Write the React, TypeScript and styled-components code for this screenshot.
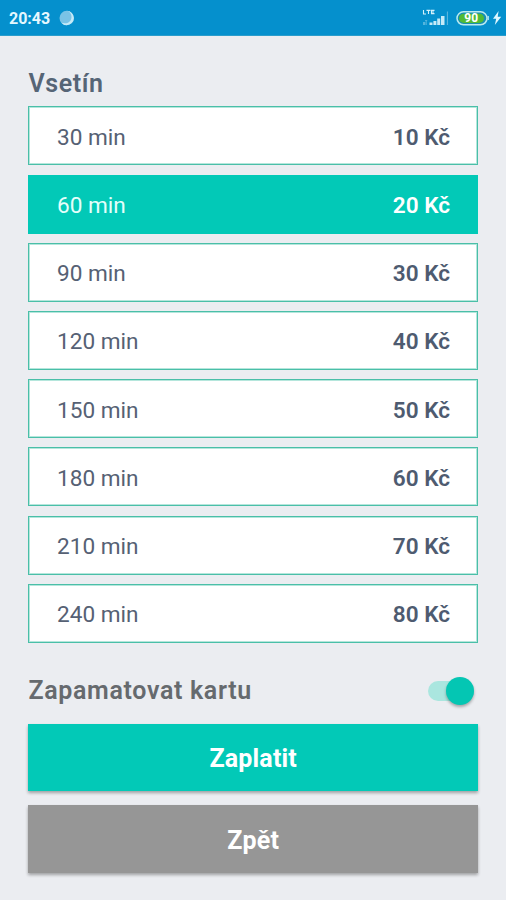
import React, { useState } from 'react';
import styled, { createGlobalStyle } from 'styled-components';

const GlobalStyle = createGlobalStyle`
  * { box-sizing: border-box; }
  body { margin: 0; background: #ebedf1; font-family: Roboto, sans-serif; }
  button { font: inherit; border: 0; padding: 0; }
`;

const Screen = styled.div`
  display: flex;
  flex-direction: column;
  height: 900px;
  background: #ebedf1;
`;

const StatusBar = styled.header`
  display: flex;
  align-items: center;
  height: 36px;
  padding: 0 4px 0 9px;
  background: #0590cd;
  border-bottom: 1px solid #2a9dcc;
  color: #e6f8ff;
`;

const Clock = styled.span`
  font-size: 16px;
  font-weight: 700;
  line-height: 20px;
  margin-top: 2px;
  width: 50px;
`;

const StatusIcons = styled.div`
  display: flex;
  align-items: center;
  margin-left: auto;
`;

const Content = styled.main`
  display: flex;
  flex-direction: column;
  padding: 31px 28px 0 28.4px;
`;

const Title = styled.h1`
  margin: 0;
  height: 39.4px;
  font-size: 25px;
  font-weight: 600;
  letter-spacing: 0.6px;
  line-height: 34px;
  color: #566576;
`;

const Options = styled.div`
  display: grid;
  grid-auto-rows: 59px;
  row-gap: 9.2px;
`;

const Option = styled.button<{ $selected: boolean }>`
  display: flex;
  align-items: center;
  justify-content: space-between;
  padding: 3px 27px 0 27.6px;
  border: 1px solid ${p => (p.$selected ? '#02c9b7' : '#4abfa8')};
  background: ${p => (p.$selected ? '#02c9b7' : '#fff')};
  box-shadow: ${p => (p.$selected ? 'none' : 'inset 0 0 0 1px #b5e6dc')};
  color: ${p => (p.$selected ? '#e4fffb' : '#566174')};
  font-size: 22.6px;
`;

const Price = styled.strong<{ $selected: boolean }>`
  font-weight: 600;
  color: ${p => (p.$selected ? '#fff' : '#4e5b70')};
`;

const RememberRow = styled.div`
  display: flex;
  align-items: center;
  justify-content: space-between;
  height: 81px;
  padding: 15px 4px 0 0;
`;

const RememberLabel = styled.span`
  font-size: 25px;
  font-weight: 600;
  letter-spacing: 0.66px;
  color: #666a6e;
`;

const Track = styled.button<{ $on: boolean }>`
  display: flex;
  align-items: center;
  justify-content: ${p => (p.$on ? 'flex-end' : 'flex-start')};
  width: 46px;
  height: 20px;
  border-radius: 10px;
  background: ${p => (p.$on ? '#aae6df' : '#bbb')};
`;

const Thumb = styled.span`
  width: 28px;
  height: 28px;
  flex: none;
  border-radius: 50%;
  background: #04c6b3;
  box-shadow: 0 2px 3px rgba(0, 0, 0, 0.3);
`;

const Actions = styled.div`
  display: grid;
  grid-auto-rows: 67.5px;
  row-gap: 14.2px;
`;

const Action = styled.button<{ $primary?: boolean }>`
  background: ${p => (p.$primary ? '#02c9b7' : '#969696')};
  color: #fff;
  font-size: 25px;
  font-weight: 700;
  letter-spacing: 0.15px;
  padding-top: 3px;
  box-shadow: 0 2px 3px rgba(0, 0, 0, 0.32);
`;

const Moon = () => (
  <svg width="18" height="18" viewBox="0 0 18 18">
    <circle cx="7.7" cy="9" r="7.2" fill="#7ac3e6" />
    <path d="M7.7 1.8A7.2 7.2 0 0 1 7.7 16.2Q4 16.2 2 13.5Q5.5 15 9 13.8C13 12 14 6 10 2.6Z" fill="#c5eaf7" />
  </svg>
);

const Signal = () => (
  <svg width="27" height="20" viewBox="0 0 27 20">
    <path d="M1.5 2v4h2.5M4.5 2.4h4M6.5 2v4M12.5 2.4h-3v3.2h3M9.5 4h2.5" stroke="#d5f0fa" strokeWidth="1.1" fill="none" />
    <path d="M1 17h2.3v-3H1z" fill="#55b5dd" />
    <path d="M3.2 13l1-1 1 1M4.2 12v5" stroke="#55b5dd" fill="none" />
    <path d="M7.5 17v-2.5h3V17zM11.4 17v-4h3v4zM15.2 17V10.6h3V17zM19 17V8h3.5v9z" fill="#c5eaf7" />
    <path d="M25.4 3.5V17" stroke="#64b9df" />
  </svg>
);

const Battery = styled.svg.attrs({ width: 36, height: 18, viewBox: '0 0 36 18' })`
  margin: 0 1px 0 6px;
`;

const BatteryIcon = () => (
  <Battery>
    <rect x="2" y="2.8" width="30" height="13" rx="6.5" fill="#168fb4" stroke="#b9e9ef" strokeWidth="1.5" />
    <rect x="4" y="4.7" width="25" height="9.2" rx="4.6" fill="#4fba36" />
    <path d="M33.2 7v4" stroke="#b9e9ef" strokeWidth="1.3" />
    <text x="16.2" y="13.4" textAnchor="middle" fontFamily="Roboto" fontSize="12" fontWeight="700" fill="#fff">90</text>
  </Battery>
);

const Bolt = () => (
  <svg width="10" height="16" viewBox="0 0 10 16">
    <path d="M6.6 1 1 8.8h3.2L2.8 15 9.2 6.8H5.7Z" fill="#dff7ff" />
  </svg>
);

const tariffs = [
  [30, 10], [60, 20], [90, 30], [120, 40],
  [150, 50], [180, 60], [210, 70], [240, 80],
];

export default function App() {
  const [minutes, setMinutes] = useState(60);
  const [remember, setRemember] = useState(true);
  return (
    <Screen>
      <GlobalStyle />
      <StatusBar>
        <Clock>20:43</Clock>
        <Moon />
        <StatusIcons>
          <Signal />
          <BatteryIcon />
          <Bolt />
        </StatusIcons>
      </StatusBar>
      <Content>
        <Title>Vsetín</Title>
        <Options>
          {tariffs.map(([min, price]) => (
            <Option key={min} $selected={min === minutes} onClick={() => setMinutes(min)}>
              <span>{min} min</span>
              <Price $selected={min === minutes}>{price} Kč</Price>
            </Option>
          ))}
        </Options>
        <RememberRow>
          <RememberLabel>Zapamatovat kartu</RememberLabel>
          <Track $on={remember} role="switch" aria-checked={remember} aria-label="Zapamatovat kartu" onClick={() => setRemember(!remember)}>
            <Thumb />
          </Track>
        </RememberRow>
        <Actions>
          <Action $primary>Zaplatit</Action>
          <Action>Zpět</Action>
        </Actions>
      </Content>
    </Screen>
  );
}
